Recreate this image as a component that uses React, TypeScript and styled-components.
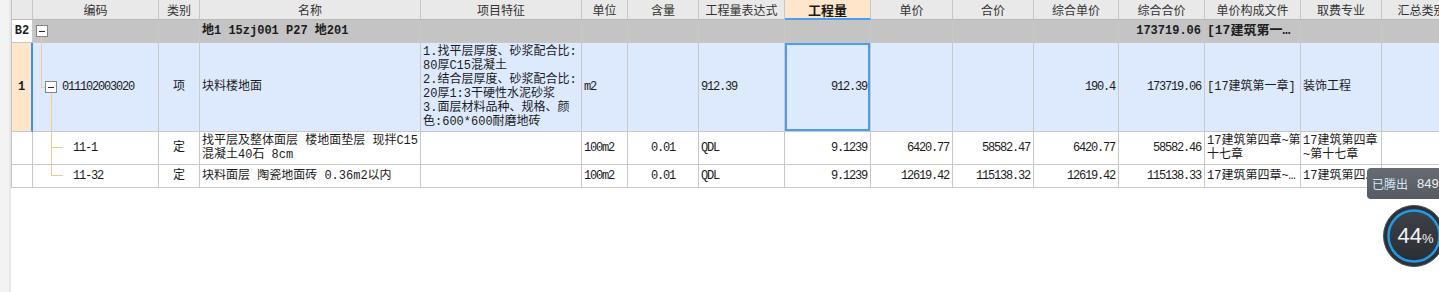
import React from 'react';
import styled, { createGlobalStyle } from 'styled-components';

const COLS = '21px 126px 41px 221px 161px 46px 71px 86px 86px 82px 81px 85px 86px 96px 81px 80px';

const GlobalStyle = createGlobalStyle`
  html, body {
    margin: 0;
    padding: 0;
    background: #fff;
  }
  body {
    font-family: "Liberation Mono", "Noto Sans CJK SC", monospace;
    font-size: 12px;
    color: #1c1c1c;
  }
`;

const Page = styled.div`
  position: relative;
  display: flex;
  width: 1439px;
  height: 292px;
  overflow: hidden;
  background: #fff;
`;

const Gutter = styled.div`
  flex: 0 0 9px;
  background: #f3f3f3;
  border-right: 2px solid #e7e7e7;
`;

const Sheet = styled.div`
  display: flex;
  flex-direction: column;
  align-self: flex-start;
  border-left: 1px solid #c4c4c4;
`;

const HeadRow = styled.div`
  display: grid;
  grid-template-columns: ${COLS};
  height: 20px;
  background: #e9e9e9;
`;

const HeadCell = styled.div<{ $active?: boolean }>`
  display: flex;
  align-items: center;
  justify-content: center;
  overflow: hidden;
  white-space: nowrap;
  font-family: "Noto Sans CJK SC", sans-serif;
  font-size: ${p => (p.$active ? '13px' : '12px')};
  font-weight: ${p => (p.$active ? 700 : 400)};
  color: ${p => (p.$active ? '#1a1a1a' : '#333')};
  background: ${p => (p.$active ? '#fde6c9' : 'transparent')};
  border-right: 1px solid #c6c6c6;
  border-bottom: ${p => (p.$active ? '2px solid #4a9ef2' : '1px solid #b9b9b9')};
`;

type Tone = 'group' | 'selected' | 'plain';

const Row = styled.div<{ $h: number; $tone: Tone }>`
  display: grid;
  grid-template-columns: ${COLS};
  height: ${p => p.$h}px;
  background: ${p => (p.$tone === 'group' ? '#c4c4c4' : p.$tone === 'selected' ? '#dde9fc' : '#fff')};
`;

type Align = 'left' | 'center' | 'right';

const Cell = styled.div<{ $align?: Align; $bold?: boolean; $num?: boolean; $sel?: boolean }>`
  display: flex;
  flex-direction: column;
  justify-content: center;
  align-items: ${p => (p.$align === 'right' ? 'flex-end' : p.$align === 'center' ? 'center' : 'flex-start')};
  padding: ${p => (p.$align === 'right' ? '0 3px 0 2px' : '0 2px')};
  min-width: 0;
  overflow: hidden;
  white-space: nowrap;
  line-height: 14px;
  font-weight: ${p => (p.$bold ? 700 : 400)};
  letter-spacing: ${p => (p.$num ? '-1.2px' : 'normal')};
  border-right: 1px solid #c8c8c8;
  border-bottom: 1px solid #c8c8c8;
  box-shadow: ${p => (p.$sel ? 'inset 0 0 0 2px #4a9df2' : 'none')};
`;

const NoCell = styled(Cell)<{ $tone: Tone }>`
  align-items: center;
  padding: 0;
  font-weight: 700;
  background: ${p => (p.$tone === 'selected' ? '#fde6ca' : '#fff')};
  border-right: ${p => (p.$tone === 'selected' ? '2px solid #3d8fec' : '1px solid #c8c8c8')};
`;

const CodeCell = styled(Cell)<{ $indent: number }>`
  position: relative;
  padding-left: ${p => p.$indent}px;
`;

const Clip = styled.span<{ $big?: boolean }>`
  display: block;
  max-width: 100%;
  overflow: hidden;
  text-overflow: ellipsis;
  white-space: nowrap;
  font-size: ${p => (p.$big ? '13px' : 'inherit')};
`;

const Line = styled.span<{ $x: number; $y: number; $w: number; $h: number }>`
  position: absolute;
  left: ${p => p.$x}px;
  top: ${p => p.$y}px;
  width: ${p => p.$w}px;
  height: ${p => p.$h}px;
  background: #f8c98c;
`;

const Toggle = styled.span<{ $x: number; $y: number }>`
  position: absolute;
  left: ${p => p.$x}px;
  top: ${p => p.$y}px;
  width: 12px;
  height: 12px;
  box-sizing: border-box;
  border: 1px solid #858585;
  background: #fff;

  &::after {
    content: '';
    position: absolute;
    left: 2px;
    top: 4.5px;
    width: 6px;
    height: 1px;
    background: #2a2a2a;
  }
`;

const Tip = styled.div`
  position: absolute;
  left: 1367px;
  top: 168px;
  width: 90px;
  height: 31px;
  display: flex;
  align-items: center;
  gap: 9px;
  padding-left: 5px;
  box-sizing: border-box;
  border-radius: 4px 0 0 4px;
  background: linear-gradient(#676c72, #565b61);
  font-family: "Noto Sans CJK SC", sans-serif;
  white-space: nowrap;
`;

const TipLabel = styled.span`
  font-size: 12px;
  color: #d3e6f8;
`;

const TipValue = styled.span`
  font-family: "Liberation Sans", sans-serif;
  font-size: 13px;
  color: #e8eef5;
`;

const Gauge = styled.div`
  position: absolute;
  left: 1382px;
  top: 204px;
  width: 64px;
  height: 64px;
  display: flex;
  align-items: center;
  justify-content: center;

  svg {
    position: absolute;
    inset: 0;
  }
`;

const GaugeText = styled.span`
  position: relative;
  font-family: "Liberation Sans", sans-serif;
  font-size: 22px;
  color: #f4f4f4;
  margin-left: 3px;

  small {
    font-size: 13px;
  }
`;

const headers = ['', '编码', '类别', '名称', '项目特征', '单位', '含量', '工程量表达式', '工程量', '单价', '合价', '综合单价', '综合合价', '单价构成文件', '取费专业', '汇总类别'];

const features = [
  '1.找平层厚度、砂浆配合比:',
  '80厚C15混凝土',
  '2.结合层厚度、砂浆配合比:',
  '20厚1:3干硬性水泥砂浆',
  '3.面层材料品种、规格、颜',
  '色:600*600耐磨地砖',
];

const Lines = ({ rows }: { rows: string[] }) => (
  <>
    {rows.map(r => (
      <span key={r}>{r}</span>
    ))}
  </>
);

type Item = {
  code: string;
  name: string[];
  unit: string;
  qty: string;
  expr: string;
  amount: string;
  price: string;
  total: string;
  unitPrice: string;
  sum: string;
  file: string[];
  major: string[];
  h: number;
  branch: number;
  last?: boolean;
};

const items: Item[] = [
  {
    code: '11-1',
    name: ['找平层及整体面层 楼地面垫层 现拌C15', '混凝土40石 8cm'],
    unit: '100m2',
    qty: '0.01',
    expr: 'QDL',
    amount: '9.1239',
    price: '6420.77',
    total: '58582.47',
    unitPrice: '6420.77',
    sum: '58582.46',
    file: ['17建筑第四章~第', '十七章'],
    major: ['17建筑第四章', '~第十七章'],
    h: 33,
    branch: 15,
  },
  {
    code: '11-32',
    name: ['块料面层 陶瓷地面砖 0.36m2以内'],
    unit: '100m2',
    qty: '0.01',
    expr: 'QDL',
    amount: '9.1239',
    price: '12619.42',
    total: '115138.32',
    unitPrice: '12619.42',
    sum: '115138.33',
    file: ['17建筑第四章~第十七章'],
    major: ['17建筑第四章~第十七章'],
    h: 23,
    branch: 10,
    last: true,
  },
];

const TextCell = ({ rows }: { rows: string[] }) => (
  <Cell>
    {rows.length === 1 ? <Clip>{rows[0]}</Clip> : <Lines rows={rows} />}
  </Cell>
);

export default function App() {
  return (
    <>
      <GlobalStyle />
      <Page>
        <Gutter />
        <Sheet>
          <HeadRow>
            {headers.map((h, i) => (
              <HeadCell key={i} $active={h === '工程量'}>
                {h}
              </HeadCell>
            ))}
          </HeadRow>

          <Row $h={23} $tone="group">
            <NoCell $tone="group">B2</NoCell>
            <CodeCell $indent={2}>
              <Toggle $x={3} $y={5} />
              <Line $x={8} $y={17} $w={1} $h={6} />
            </CodeCell>
            <Cell />
            <Cell $bold>地1 15zj001 P27 地201</Cell>
            <Cell />
            <Cell />
            <Cell />
            <Cell />
            <Cell />
            <Cell />
            <Cell />
            <Cell />
            <Cell $align="right" $bold>173719.06</Cell>
            <Cell $bold>
              <Clip $big>[17建筑第一章]</Clip>
            </Cell>
            <Cell />
            <Cell />
          </Row>

          <Row $h={89} $tone="selected">
            <NoCell $tone="selected">1</NoCell>
            <CodeCell $indent={29} $num>
              <Line $x={8} $y={0} $w={1} $h={45} />
              <Line $x={8} $y={44} $w={5} $h={1} />
              <Toggle $x={12} $y={38} />
              <Line $x={18} $y={50} $w={1} $h={40} />
              011102003020
            </CodeCell>
            <Cell $align="center">项</Cell>
            <Cell>块料楼地面</Cell>
            <Cell>
              <Lines rows={features} />
            </Cell>
            <Cell $num>m2</Cell>
            <Cell />
            <Cell $num>912.39</Cell>
            <Cell $align="right" $num $sel>912.39</Cell>
            <Cell />
            <Cell />
            <Cell $align="right" $num>190.4</Cell>
            <Cell $align="right" $num>173719.06</Cell>
            <Cell>[17建筑第一章]</Cell>
            <Cell>装饰工程</Cell>
            <Cell />
          </Row>

          {items.map(it => (
            <Row key={it.code} $h={it.h} $tone="plain">
              <NoCell $tone="plain" />
              <CodeCell $indent={40} $num>
                <Line $x={18} $y={0} $w={1} $h={it.last ? it.branch + 1 : it.h} />
                <Line $x={18} $y={it.branch} $w={12} $h={1} />
                {it.code}
              </CodeCell>
              <Cell $align="center">定</Cell>
              <TextCell rows={it.name} />
              <Cell />
              <Cell $num>{it.unit}</Cell>
              <Cell $align="center" $num>{it.qty}</Cell>
              <Cell $num>{it.expr}</Cell>
              <Cell $align="right" $num>{it.amount}</Cell>
              <Cell $align="right" $num>{it.price}</Cell>
              <Cell $align="right" $num>{it.total}</Cell>
              <Cell $align="right" $num>{it.unitPrice}</Cell>
              <Cell $align="right" $num>{it.sum}</Cell>
              <TextCell rows={it.file} />
              <TextCell rows={it.major} />
              <Cell />
            </Row>
          ))}
        </Sheet>

        <Tip>
          <TipLabel>已腾出</TipLabel>
          <TipValue>849</TipValue>
        </Tip>

        <Gauge>
          <svg width="64" height="64" viewBox="0 0 64 64">
            <defs>
              <linearGradient id="gaugeFill" x1="0" y1="0" x2="0" y2="1">
                <stop offset="0" stopColor="#3d4148" />
                <stop offset="1" stopColor="#2a2d32" />
              </linearGradient>
            </defs>
            <circle cx="32" cy="32" r="30.5" fill="#2d3035" stroke="#4d5259" strokeWidth="1" />
            <circle cx="32" cy="32" r="25.5" fill="url(#gaugeFill)" stroke="#1c9cea" strokeWidth="2.5" />
          </svg>
          <GaugeText>
            44<small>%</small>
          </GaugeText>
        </Gauge>
      </Page>
    </>
  );
}
